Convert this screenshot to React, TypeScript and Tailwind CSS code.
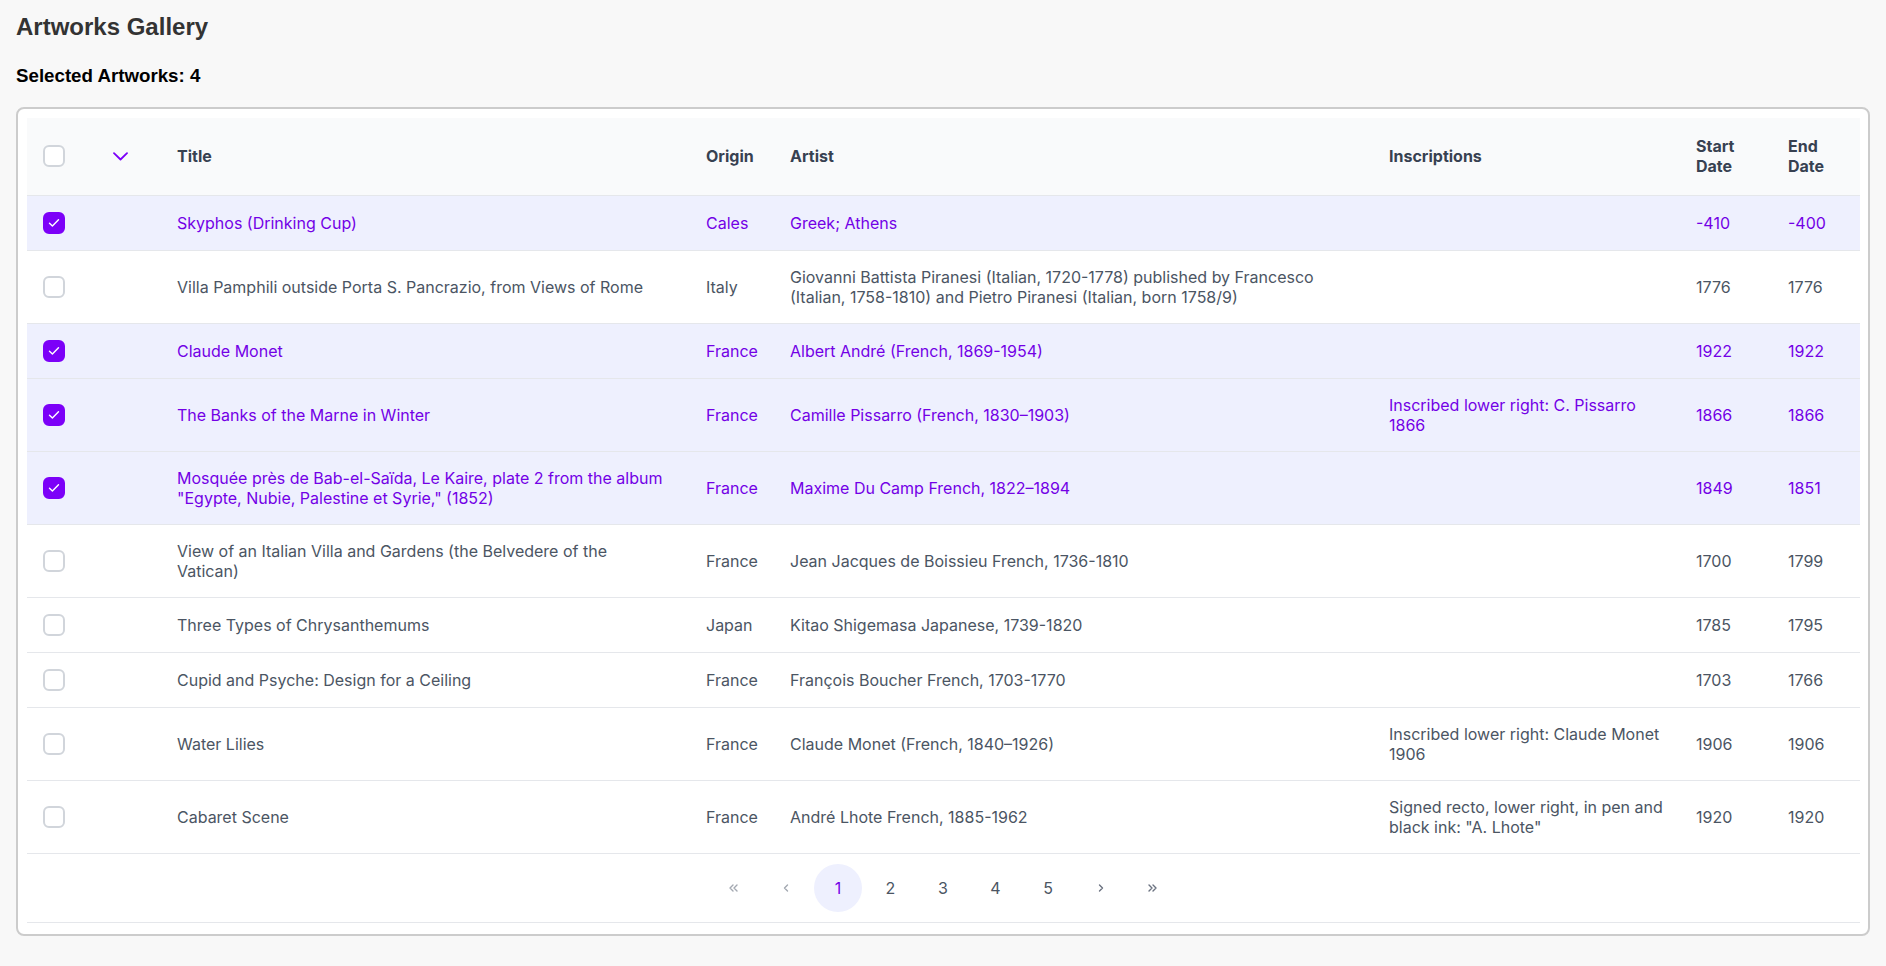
import { useState } from "react";

type Artwork = {
  id: number;
  title: string;
  origin: string;
  artist: string;
  inscriptions: string;
  start: string;
  end: string;
};

const artworks: Artwork[] = [
  { id: 1, title: "Skyphos (Drinking Cup)", origin: "Cales", artist: "Greek; Athens", inscriptions: "", start: "-410", end: "-400" },
  {
    id: 2,
    title: "Villa Pamphili outside Porta S. Pancrazio, from Views of Rome",
    origin: "Italy",
    artist: "Giovanni Battista Piranesi (Italian, 1720-1778) published by Francesco (Italian, 1758-1810) and Pietro Piranesi (Italian, born 1758/9)",
    inscriptions: "",
    start: "1776",
    end: "1776",
  },
  { id: 3, title: "Claude Monet", origin: "France", artist: "Albert André (French, 1869-1954)", inscriptions: "", start: "1922", end: "1922" },
  {
    id: 4,
    title: "The Banks of the Marne in Winter",
    origin: "France",
    artist: "Camille Pissarro (French, 1830–1903)",
    inscriptions: "Inscribed lower right: C. Pissarro 1866",
    start: "1866",
    end: "1866",
  },
  {
    id: 5,
    title: 'Mosquée près de Bab-el-Saïda, Le Kaire, plate 2 from the album "Egypte, Nubie, Palestine et Syrie," (1852)',
    origin: "France",
    artist: "Maxime Du Camp French, 1822–1894",
    inscriptions: "",
    start: "1849",
    end: "1851",
  },
  {
    id: 6,
    title: "View of an Italian Villa and Gardens (the Belvedere of the Vatican)",
    origin: "France",
    artist: "Jean Jacques de Boissieu French, 1736-1810",
    inscriptions: "",
    start: "1700",
    end: "1799",
  },
  { id: 7, title: "Three Types of Chrysanthemums", origin: "Japan", artist: "Kitao Shigemasa Japanese, 1739-1820", inscriptions: "", start: "1785", end: "1795" },
  { id: 8, title: "Cupid and Psyche: Design for a Ceiling", origin: "France", artist: "François Boucher French, 1703-1770", inscriptions: "", start: "1703", end: "1766" },
  {
    id: 9,
    title: "Water Lilies",
    origin: "France",
    artist: "Claude Monet (French, 1840–1926)",
    inscriptions: "Inscribed lower right: Claude Monet 1906",
    start: "1906",
    end: "1906",
  },
  {
    id: 10,
    title: "Cabaret Scene",
    origin: "France",
    artist: "André Lhote French, 1885-1962",
    inscriptions: 'Signed recto, lower right, in pen and black ink: "A. Lhote"',
    start: "1920",
    end: "1920",
  },
];

function Checkbox({ checked, onChange }: { checked: boolean; onChange?: () => void }) {
  return (
    <button
      type="button"
      onClick={onChange}
      className={
        checked
          ? "flex h-[22px] w-[22px] items-center justify-center rounded-[6px] border-2 border-[#7c00f8] bg-[#7c00f8]"
          : "flex h-[22px] w-[22px] items-center justify-center rounded-[6px] border-2 border-[#d1d5db] bg-white"
      }
    >
      {checked && (
        <svg width="12" height="10" viewBox="0 0 12 10" fill="none">
          <path d="M1.5 5.2 4.4 8 10.5 1.8" stroke="white" strokeWidth="1.4" strokeLinecap="round" strokeLinejoin="round" />
        </svg>
      )}
    </button>
  );
}

function Chevron({ d }: { d: string }) {
  return (
    <svg width="14" height="14" viewBox="0 0 14 14" fill="none">
      <path d={d} stroke="currentColor" strokeWidth="1.4" strokeLinecap="round" strokeLinejoin="round" />
    </svg>
  );
}

export default function App() {
  const [selected, setSelected] = useState<number[]>([1, 3, 4, 5]);
  const [page, setPage] = useState(1);

  const toggle = (id: number) =>
    setSelected((s) => (s.includes(id) ? s.filter((x) => x !== id) : [...s, id]));

  const th = "px-4 py-[18.5px] text-left align-middle font-bold text-[#374151] leading-[20px]";
  const td = "px-4 py-4 align-middle leading-[20px]";

  return (
    <div className="min-h-screen bg-[#f8f8f8] px-4 pt-[13px] pb-8 font-['Liberation_Sans',Arial,sans-serif]">
      <h1 className="text-2xl font-bold leading-[28px] text-[#333333]">Artworks Gallery</h1>
      <h3 className="mt-[24px] text-[18.72px] font-bold leading-[21.5px] text-black">
        Selected Artworks: {selected.length}
      </h3>

      <div className="mt-[20px] rounded-[8px] border-2 border-[#cccccc] bg-white px-[8.5px] pt-[9px] pb-[11px]">
        <table className="w-full table-fixed border-collapse font-['Inter',sans-serif] text-[16px]">
          <colgroup>
            <col className="w-[62px]" />
            <col className="w-[72.5px]" />
            <col className="w-[529px]" />
            <col className="w-[84px]" />
            <col className="w-[599px]" />
            <col className="w-[307px]" />
            <col className="w-[92px]" />
            <col />
          </colgroup>
          <thead>
            <tr className="border-b border-[#e5e7eb] bg-[#f9fafb]">
              <th className={th}>
                <Checkbox checked={false} />
              </th>
              <th className={th}>
                <span className="flex h-5 w-8 items-center justify-center">
                  <svg width="15" height="9" viewBox="0 0 15 9" fill="none">
                    <path d="M1 1.2 7.5 7.5 14 1.2" stroke="#7c00f8" strokeWidth="1.8" strokeLinecap="round" strokeLinejoin="round" />
                  </svg>
                </span>
              </th>
              <th className={th}>Title</th>
              <th className={th}>Origin</th>
              <th className={th}>Artist</th>
              <th className={th}>Inscriptions</th>
              <th className={th}>
                Start
                <br />
                Date
              </th>
              <th className={th}>
                End
                <br />
                Date
              </th>
            </tr>
          </thead>
          <tbody>
            {artworks.map((a) => {
              const on = selected.includes(a.id);
              return (
                <tr
                  key={a.id}
                  className={
                    on
                      ? "border-b border-[#e5e7eb] bg-[#eef0fe] text-[#7300e6]"
                      : "border-b border-[#e5e7eb] bg-white text-[#4b5563]"
                  }
                >
                  <td className={td}>
                    <Checkbox checked={on} onChange={() => toggle(a.id)} />
                  </td>
                  <td className={td}></td>
                  <td className="py-4 pl-4 pr-[24px] align-middle leading-[20px]">{a.title}</td>
                  <td className={td}>{a.origin}</td>
                  <td className={td}>{a.artist}</td>
                  <td className={td}>{a.inscriptions}</td>
                  <td className={td}>{a.start}</td>
                  <td className={td}>{a.end}</td>
                </tr>
              );
            })}
          </tbody>
        </table>

        <div className="flex items-center justify-center gap-[4.5px] border-b border-[#e5e7eb] py-[10px] font-['Inter',sans-serif] text-[16px]">
          <button type="button" className="flex h-12 w-12 items-center justify-center text-[#a3a8b1]">
            <Chevron d="M7 4 4 7l3 3M11 4 8 7l3 3" />
          </button>
          <button type="button" className="flex h-12 w-12 items-center justify-center text-[#a3a8b1]">
            <Chevron d="M8.5 4 5.5 7l3 3" />
          </button>
          {[1, 2, 3, 4, 5].map((n) => (
            <button
              key={n}
              type="button"
              onClick={() => setPage(n)}
              className={
                n === page
                  ? "flex h-12 w-12 items-center justify-center rounded-full bg-[#eef0fe] text-[#7300e6]"
                  : "flex h-12 w-12 items-center justify-center rounded-full text-[#4b5563]"
              }
            >
              {n}
            </button>
          ))}
          <button type="button" className="flex h-12 w-12 items-center justify-center text-[#6b7280]">
            <Chevron d="M5.5 4 8.5 7l-3 3" />
          </button>
          <button type="button" className="flex h-12 w-12 items-center justify-center text-[#6b7280]">
            <Chevron d="M3 4 6 7l-3 3M7 4l3 3-3 3" />
          </button>
        </div>
      </div>
    </div>
  );
}
